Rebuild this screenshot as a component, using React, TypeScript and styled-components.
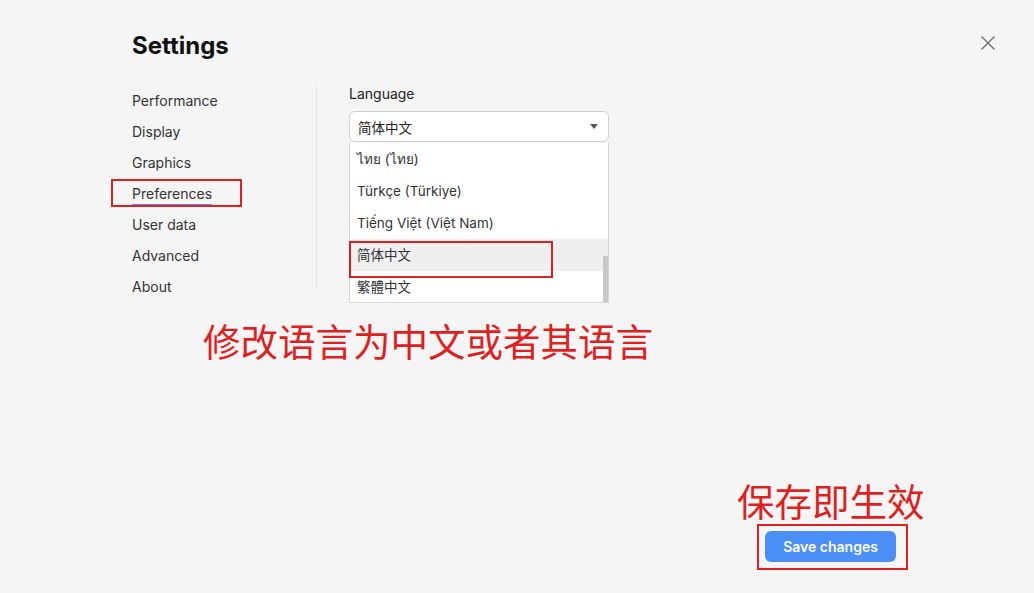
import * as React from 'react';
import styled, {createGlobalStyle} from 'styled-components';

const $BG = '#f5f5f5';
const $TEXT = '#222';
const $RED = '#e01f1f';
const $BLUE = '#4b8ff6';

const GlobalStyle = createGlobalStyle`
  html, body {
    margin: 0;
    padding: 0;
    background: ${$BG};
  }
  body {
    font-family: Inter, "Noto Sans", "Noto Sans CJK SC", sans-serif;
    color: ${$TEXT};
  }
`;

const Page = styled.div`
  position: relative;
  width: 1034px;
  height: 593px;
  box-sizing: border-box;
  padding: 30px 138px 31px 132px;
  background: ${$BG};
  overflow: hidden;
  display: flex;
  flex-direction: column;
`;

const Title = styled.h1`
  margin: 0;
  height: 32px;
  font-size: 24px;
  line-height: 32px;
  font-weight: 700;
  color: #111;
`;

const Close = styled.button`
  position: absolute;
  top: 34px;
  right: 37px;
  width: 18px;
  height: 18px;
  padding: 0;
  border: 0;
  background: none;
  display: flex;
  align-items: center;
  justify-content: center;
`;

const Body = styled.div`
  display: flex;
  margin-top: 23px;
  flex: 1;
`;

const Nav = styled.ul`
  list-style: none;
  margin: 0;
  padding: 0;
  width: 184px;
  border-right: 1px solid #e6e6e6;
  height: 205px;
`;

const NavItem = styled.li<{active?: boolean}>`
  height: 31px;
  line-height: 31px;
  font-size: 14px;
  color: #333;
  span {
    border-bottom: ${({active}) => (active ? `1px solid ${$BLUE}` : 'none')};
    padding-bottom: 2px;
  }
`;

const Content = styled.div`
  padding-left: 32px;
  width: 260px;
`;

const Label = styled.div`
  font-size: 14px;
  line-height: 18px;
  color: #222;
`;

const Select = styled.div`
  margin-top: 8px;
  height: 31px;
  box-sizing: border-box;
  border: 1px solid #cfcfcf;
  border-radius: 6px;
  background: #fff;
  display: flex;
  align-items: center;
  justify-content: space-between;
  padding: 0 10px 0 8px;
  font-size: 13.5px;
`;

const Caret = styled.span`
  width: 0;
  height: 0;
  border-left: 4px solid transparent;
  border-right: 4px solid transparent;
  border-top: 5px solid #555;
`;

const List = styled.div`
  position: relative;
  margin-top: 1px;
  height: 160px;
  box-sizing: border-box;
  border: 1px solid #d6d6d6;
  border-top: 0;
  background: #fff;
  overflow: hidden;
`;

const Option = styled.div<{selected?: boolean}>`
  height: 32px;
  line-height: 32px;
  padding-left: 7px;
  font-size: 13.5px;
  color: #333;
  background: ${({selected}) => (selected ? '#efefef' : '#fff')};
`;

const Thumb = styled.div`
  position: absolute;
  right: 0;
  top: 113px;
  width: 5px;
  height: 47px;
  background: #c8c8c8;
`;

const Footer = styled.div`
  display: flex;
  justify-content: flex-end;
`;

const SaveButton = styled.button`
  width: 131px;
  height: 31px;
  border: 0;
  border-radius: 6px;
  background: ${$BLUE};
  color: #fff;
  font-family: Inter, "Noto Sans", sans-serif;
  font-size: 14px;
  font-weight: 600;
`;

const Mark = styled.div`
  position: absolute;
  border: 2px solid ${$RED};
  box-sizing: border-box;
`;

const Note = styled.div`
  position: absolute;
  color: ${$RED};
  font-family: "Noto Sans CJK SC", sans-serif;
  font-size: 37.5px;
  line-height: 40px;
  white-space: nowrap;
`;

const navItems = ['Performance', 'Display', 'Graphics', 'Preferences', 'User data', 'Advanced', 'About'];
const options = ['ไทย (ไทย)', 'Türkçe (Türkiye)', 'Tiếng Việt (Việt Nam)', '简体中文', '繁體中文'];

export default function App() {
  return (
    <Page>
      <GlobalStyle />
      <Title>Settings</Title>
      <Close aria-label="close">
        <svg width="16" height="16" viewBox="0 0 16 16">
          <path d="M1.5 1.5 L14.5 14.5 M14.5 1.5 L1.5 14.5" stroke="#6f6f6f" strokeWidth="1.4" />
        </svg>
      </Close>
      <Body>
        <Nav>
          {navItems.map(item => (
            <NavItem key={item} active={item === 'Preferences'}>
              <span>{item}</span>
            </NavItem>
          ))}
        </Nav>
        <Content>
          <Label>Language</Label>
          <Select>
            <span>简体中文</span>
            <Caret />
          </Select>
          <List>
            {options.map(opt => (
              <Option key={opt} selected={opt === '简体中文'}>{opt}</Option>
            ))}
            <Thumb />
          </List>
        </Content>
      </Body>
      <Footer>
        <SaveButton>Save changes</SaveButton>
      </Footer>

      <Mark style={{left: 111, top: 179, width: 131, height: 28}} />
      <Mark style={{left: 349, top: 241, width: 204, height: 37}} />
      <Mark style={{left: 757, top: 524, width: 151, height: 46}} />
      <Note style={{left: 203, top: 320}}>修改语言为中文或者其语言</Note>
      <Note style={{left: 737, top: 480}}>保存即生效</Note>
    </Page>
  );
}
